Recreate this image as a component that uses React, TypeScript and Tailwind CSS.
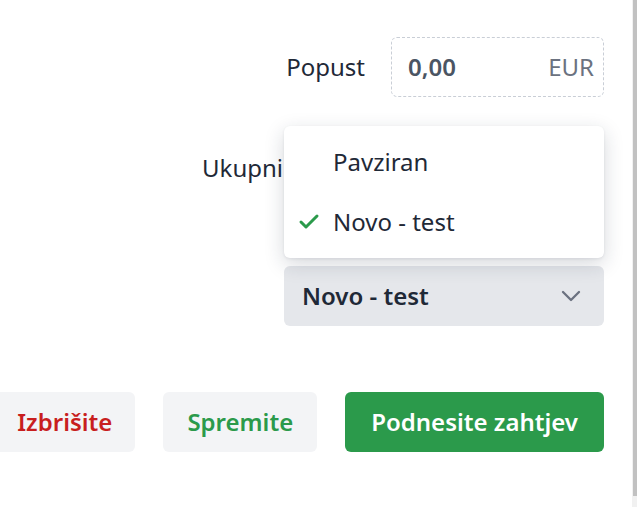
import { Check, ChevronDown } from 'lucide-react'

const options = [
  { id: 'paused', label: 'Pavziran' },
  { id: 'new', label: 'Novo - test' },
]

export default function App() {
  const selected = 'new'

  return (
    <div
      className="flex h-[507px] w-full overflow-hidden bg-white text-[24px] text-[#1f2937]"
      style={{ fontFamily: '"Noto Sans", "Open Sans", sans-serif' }}
    >
      <div className="flex min-w-0 flex-1 flex-col items-end pr-[28px] pt-[37px]">
        {/* Popust */}
        <div className="flex items-center gap-[26px]">
          <span>Popust</span>
          <div className="flex h-[60px] w-[213px] items-center justify-between rounded-md border border-dashed border-[#c9ced6] pl-[16px] pr-[9px]">
            <span className="font-semibold text-[#4b5563]">0,00</span>
            <span className="text-[#6b7280]">EUR</span>
          </div>
        </div>

        {/* Ukupni */}
        <div className="mt-[41px] flex h-[60px] items-center">
          <span>Ukupni</span>
          <div className="w-[321px]" />
        </div>

        {/* Status select with open menu */}
        <div className="relative mt-[68px] w-[320px]">
          <div className="absolute bottom-[68px] left-0 w-full rounded-md bg-white py-[6px] shadow-[0_6px_20px_rgba(30,41,59,0.18),0_1px_3px_rgba(30,41,59,0.08)]">
            {options.map((o) => (
              <div key={o.id} className="flex h-[60px] items-center">
                <span className="flex w-[49px] justify-end pr-[12px]">
                  {o.id === selected && <Check className="h-[24px] w-[24px] text-[#2b9a4b]" strokeWidth={3} />}
                </span>
                <span>{o.label}</span>
              </div>
            ))}
          </div>
          <div className="flex h-[60px] items-center justify-between rounded-md bg-[#e5e7eb] pl-[18px] pr-[17px]">
            <span className="font-semibold">Novo - test</span>
            <ChevronDown className="h-[32px] w-[32px] text-[#6b7280]" strokeWidth={1.75} />
          </div>
        </div>

        {/* Actions */}
        <div className="mt-[66px] flex shrink-0 gap-[28px]">
          <button className="h-[60px] shrink-0 whitespace-nowrap rounded-md bg-[#f3f4f6] px-[23px] font-semibold text-[#c81e1e]">
            Izbrišite
          </button>
          <button className="h-[60px] shrink-0 whitespace-nowrap rounded-md bg-[#f3f4f6] px-[24px] font-semibold text-[#2b9a4b]">
            Spremite
          </button>
          <button className="h-[60px] shrink-0 whitespace-nowrap rounded-md bg-[#2b9a4b] px-[26px] font-semibold text-white">
            Podnesite zahtjev
          </button>
        </div>
      </div>

      {/* scrollbar */}
      <div className="flex w-[5px] shrink-0 bg-[#f1f1f1] pl-[1px]">
        <div className="h-[496px] w-full bg-[#c1c1c1]" />
      </div>
    </div>
  )
}
